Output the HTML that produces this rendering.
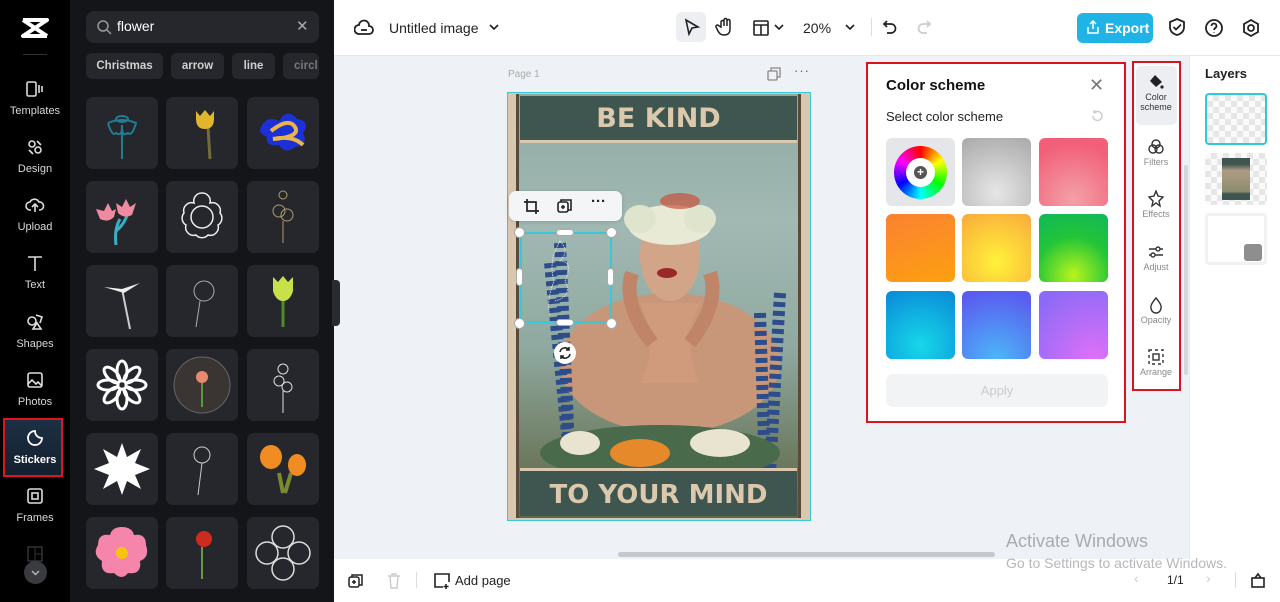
<!DOCTYPE html>
<html><head><meta charset="utf-8"><style>
*{box-sizing:border-box;margin:0;padding:0}
body{width:1280px;height:602px;overflow:hidden;font-family:"Liberation Sans",sans-serif;background:#eef1f5;position:relative}
.a{position:absolute}
.rail{left:0;top:0;width:70px;height:602px;background:#000}
.ri{position:absolute;left:0;width:70px;text-align:center;color:#d8d8d8;font-size:11px}
.ri svg{display:block;margin:0 auto 7px}
.panel{left:70px;top:0;width:264px;height:602px;background:#141519}
.tile{position:absolute;width:72px;height:72px;background:#26272c;border-radius:7px}
.chip{position:absolute;top:53px;height:26px;background:#26272c;border-radius:6px;color:#d0d0d0;font-size:11.5px;font-weight:bold;line-height:26px;text-align:center}
.top{left:334px;top:0;width:946px;height:55px;background:#fff}
.sw{position:absolute;width:69px;height:68px;border-radius:6px}
.ti{position:absolute;left:1135px;width:42px;text-align:center;font-size:9px;color:#888}
.ti svg{display:block;margin:0 auto 1px}
</style></head><body>
<div class="a rail"></div>
<svg class="a" style="left:20px;top:17px" width="30" height="22" viewBox="0 0 30 22"><path d="M3 3h24L3 19h24M3 3l24 16" fill="none" stroke="#fff" stroke-width="4" stroke-linejoin="round"/></svg>
<div class="a" style="left:23px;top:54px;width:24px;height:1px;background:#333"></div>
<div class="ri" style="top:80px"><svg width="20" height="18" viewBox="0 0 20 18" fill="none" stroke="#ddd" stroke-width="1.6"><rect x="2" y="2" width="9" height="14" rx="1.5"/><path d="M14 5v8M17 6v6"/></svg>Templates</div>
<div class="ri" style="top:138px"><svg width="20" height="18" viewBox="0 0 20 18" fill="none" stroke="#ddd" stroke-width="1.6"><circle cx="7" cy="6" r="3"/><circle cx="13" cy="12" r="3"/><path d="M12 3l4 4M4 12l4 4"/></svg>Design</div>
<div class="ri" style="top:196px"><svg width="20" height="18" viewBox="0 0 20 18" fill="none" stroke="#ddd" stroke-width="1.6"><path d="M6 14H5a4 4 0 010-8 5 5 0 019 0 4 4 0 011 8h-1M10 16V8M7 11l3-3 3 3"/></svg>Upload</div>
<div class="ri" style="top:254px"><svg width="20" height="18" viewBox="0 0 20 18" fill="none" stroke="#ddd" stroke-width="1.6"><path d="M3 3h14M10 3v14"/></svg>Text</div>
<div class="ri" style="top:313px"><svg width="20" height="18" viewBox="0 0 20 18" fill="none" stroke="#ddd" stroke-width="1.6"><circle cx="7" cy="8" r="4"/><path d="M11 2l6 2-2 6M8 16l4-6 4 6z"/></svg>Shapes</div>
<div class="ri" style="top:371px"><svg width="20" height="18" viewBox="0 0 20 18" fill="none" stroke="#ddd" stroke-width="1.6"><rect x="3" y="2" width="14" height="14" rx="2"/><path d="M3 13l4-4 4 4 2-2 4 4"/></svg>Photos</div>
<div class="a" style="left:3px;top:418px;width:60px;height:59px;border:2px solid #e0141e;background:linear-gradient(#1c3045,#14202e)"></div>
<div class="ri" style="top:429px;color:#fff;font-weight:bold"><svg width="20" height="18" viewBox="0 0 20 18" fill="none" stroke="#fff" stroke-width="1.8"><path d="M10 2a7 7 0 107 7c-4 0-7-3-7-7z"/></svg>Stickers</div>
<div class="ri" style="top:487px"><svg width="20" height="18" viewBox="0 0 20 18" fill="none" stroke="#ddd" stroke-width="1.6"><rect x="3" y="2" width="14" height="14" rx="2"/><rect x="7" y="6" width="6" height="6"/></svg>Frames</div>
<svg class="a" style="left:27px;top:546px" width="16" height="16"><rect x="1" y="1" width="14" height="14" fill="none" stroke="#333" stroke-width="1.5"/><path d="M8 1v14M8 8h7" stroke="#333"/></svg>
<div class="a" style="left:24px;top:561px;width:23px;height:23px;border-radius:50%;background:#3a3b40"><svg width="23" height="23"><path d="M8 10l3.5 3.5L15 10" fill="none" stroke="#bbb" stroke-width="1.4"/></svg></div>

<div class="a panel"></div>
<div class="a" style="left:86px;top:11px;width:233px;height:32px;background:#26272c;border-radius:8px"></div>
<svg class="a" style="left:96px;top:19px" width="16" height="16" fill="none" stroke="#999" stroke-width="1.5"><circle cx="7" cy="7" r="5"/><path d="M11 11l4 4"/></svg>
<div class="a" style="left:117px;top:18px;color:#fff;font-size:14px">flower</div>
<div class="a" style="left:296px;top:17px;color:#aaa;font-size:15px">✕</div>
<div class="chip" style="left:86px;width:77px">Christmas</div>
<div class="chip" style="left:171px;width:53px">arrow</div>
<div class="chip" style="left:232px;width:43px">line</div>
<div class="chip" style="left:283px;width:36px;overflow:hidden;text-align:left;padding-left:11px;color:#777">circl</div>

<div class="tile" style="left:86px;top:97px"><svg width="72" height="72"><g fill="none" stroke="#1d7d93" stroke-width="2"><ellipse cx="36" cy="22" rx="6" ry="3"/><path d="M22 26q14-6 28 0q-4 14-8 10q-6 4-6-6q0 10-6 6q-4 4-8-10M36 28v34"/></g></svg></div>
<div class="tile" style="left:166px;top:97px"><svg width="72" height="72"><path d="M42 30l2 32" stroke="#6f6e3e" stroke-width="3"/><path d="M30 14l4 5 5-6 5 6 4-5v8q0 10-9 10t-9-10z" fill="#e3b52a"/></svg></div>
<div class="tile" style="left:247px;top:97px"><svg width="72" height="72"><path d="M14 30q6-12 18-6q8-14 18-2q14 2 6 14q6 12-8 14q-10 8-16-2q-14 2-12-8q-10-4-6-10z" fill="#1c30d8"/><path d="M24 34q18-14 24-4t-22 12q20-4 30 6" fill="none" stroke="#e9b44a" stroke-width="4"/></svg></div>
<div class="tile" style="left:86px;top:181px"><svg width="72" height="72"><path d="M34 38q-6 10-4 26M30 50q8-6 12-18" stroke="#37b0c4" stroke-width="3" fill="none"/><path d="M10 28l8 2 4-8 4 8 4-2-2 8q-6 6-14 2z M30 22l6 4 4-8 4 8 6-4-4 12q-8 4-14-2z" fill="#f08aa0"/></svg></div>
<div class="tile" style="left:166px;top:181px"><svg width="72" height="72"><g fill="none" stroke="#eee" stroke-width="1.5"><circle cx="36" cy="36" r="11"/><path d="M36 12a8 8 0 018 10a8 8 0 0110 10a8 8 0 01-2 12a8 8 0 01-10 10a8 8 0 01-12 0a8 8 0 01-10-10a8 8 0 01-2-12a8 8 0 0110-10a8 8 0 018-10z"/></g></svg></div>
<div class="tile" style="left:247px;top:181px"><svg width="72" height="72"><g fill="none" stroke="#b39a6b" stroke-width="1"><circle cx="36" cy="14" r="4"/><circle cx="32" cy="30" r="6"/><circle cx="40" cy="34" r="6"/><path d="M36 40v22"/></g></svg></div>
<div class="tile" style="left:86px;top:265px"><svg width="72" height="72"><path d="M36 24l8 40" stroke="#ccc" stroke-width="2"/><path d="M18 22l18 2 18-6-16 10z" fill="#eee"/></svg></div>
<div class="tile" style="left:166px;top:265px"><svg width="72" height="72"><g fill="none" stroke="#aaa"><circle cx="38" cy="26" r="10"/><path d="M34 36l-4 26"/></g></svg></div>
<div class="tile" style="left:247px;top:265px"><svg width="72" height="72"><path d="M36 34v28" stroke="#4f8a2c" stroke-width="3"/><path d="M26 12l5 5 5-6 5 6 5-5v14q-3 10-10 10t-10-10z" fill="#c8e04a"/></svg></div>
<div class="tile" style="left:86px;top:349px"><svg width="72" height="72"><g fill="none" stroke="#fff" stroke-width="3"><ellipse cx="36" cy="22" rx="5" ry="10"/><ellipse cx="36" cy="50" rx="5" ry="10"/><ellipse cx="22" cy="36" rx="10" ry="5"/><ellipse cx="50" cy="36" rx="10" ry="5"/><ellipse cx="26" cy="26" rx="5" ry="10" transform="rotate(-45 26 26)"/><ellipse cx="46" cy="46" rx="5" ry="10" transform="rotate(-45 46 46)"/><ellipse cx="46" cy="26" rx="5" ry="10" transform="rotate(45 46 26)"/><ellipse cx="26" cy="46" rx="5" ry="10" transform="rotate(45 26 46)"/></g></svg></div>
<div class="tile" style="left:166px;top:349px"><svg width="72" height="72"><circle cx="36" cy="36" r="28" fill="#3a3532" stroke="#666"/><circle cx="36" cy="28" r="6" fill="#e78a70"/><path d="M36 34v24" stroke="#5a9a3a" stroke-width="2"/></svg></div>
<div class="tile" style="left:247px;top:349px"><svg width="72" height="72"><g fill="none" stroke="#ddd"><circle cx="36" cy="20" r="5"/><circle cx="32" cy="32" r="5"/><circle cx="40" cy="38" r="5"/><path d="M36 42v22"/></g></svg></div>
<div class="tile" style="left:86px;top:433px"><svg width="72" height="72"><path d="M36 10l5 14 14-8-6 14 15 6-15 6 6 14-14-8-5 14-5-14-14 8 6-14-15-6 15-6-6-14 14 8z" fill="#fff"/></svg></div>
<div class="tile" style="left:166px;top:433px"><svg width="72" height="72"><g fill="none" stroke="#ccc"><circle cx="36" cy="22" r="8"/><path d="M36 30l-4 32"/></g></svg></div>
<div class="tile" style="left:247px;top:433px"><svg width="72" height="72"><path d="M32 40l4 20M44 40l-6 20" stroke="#7a8a30" stroke-width="4"/><ellipse cx="24" cy="24" rx="11" ry="12" fill="#f08c22"/><ellipse cx="50" cy="32" rx="9" ry="11" fill="#f08c22"/></svg></div>
<div class="tile" style="left:86px;top:517px"><svg width="72" height="72"><path d="M36 10q10 0 12 8q12-2 12 10q4 12-6 16q2 14-12 12q-6 8-14 0q-14 2-12-12q-10-6-4-16q0-12 12-10q2-8 12-8z" fill="#f585ab"/><circle cx="36" cy="36" r="6" fill="#f6c40f"/></svg></div>
<div class="tile" style="left:166px;top:517px"><svg width="72" height="72"><path d="M36 30v32" stroke="#6a9a3a" stroke-width="2"/><circle cx="38" cy="22" r="8" fill="#cf2a1e"/></svg></div>
<div class="tile" style="left:247px;top:517px"><svg width="72" height="72"><g fill="none" stroke="#ddd" stroke-width="1.5"><circle cx="36" cy="20" r="11"/><circle cx="36" cy="52" r="11"/><circle cx="20" cy="36" r="11"/><circle cx="52" cy="36" r="11"/></g></svg></div>
<div class="a" style="left:332px;top:280px;width:8px;height:46px;background:#2a2b30;border-radius:0 4px 4px 0"></div>

<div class="a top"></div>
<svg class="a" style="left:354px;top:19px" width="20" height="18" fill="none" stroke="#222" stroke-width="1.8"><path d="M5 15h10a4 4 0 000-8 5 5 0 00-10-1 4 4 0 000 9z"/><path d="M7 11h6"/></svg>
<div class="a" style="left:389px;top:20px;font-size:14px;color:#222">Untitled image</div>
<svg class="a" style="left:488px;top:22px" width="12" height="10"><path d="M2 3l4 4 4-4" fill="none" stroke="#222" stroke-width="1.6"/></svg>
<div class="a" style="left:676px;top:12px;width:30px;height:30px;background:#eceef1;border-radius:6px"></div>
<svg class="a" style="left:683px;top:18px" width="18" height="18" fill="none" stroke="#222" stroke-width="1.6"><path d="M3 2l12 7-6 1-3 6z"/></svg>
<svg class="a" style="left:715px;top:17px" width="20" height="20" fill="none" stroke="#222" stroke-width="1.5"><path d="M6 10V5a1.5 1.5 0 013 0v4V3a1.5 1.5 0 013 0v6V4a1.5 1.5 0 013 0v8q0 6-6 6-4 0-6-4l-2-4a1.5 1.5 0 012.5-1.5z"/></svg>
<svg class="a" style="left:752px;top:19px" width="18" height="18" fill="none" stroke="#222" stroke-width="1.6"><rect x="2" y="2" width="14" height="14" rx="1"/><path d="M2 6h14M9 6v10"/></svg>
<svg class="a" style="left:773px;top:22px" width="12" height="10"><path d="M2 3l4 4 4-4" fill="none" stroke="#222" stroke-width="1.6"/></svg>
<div class="a" style="left:803px;top:20px;font-size:14px;color:#222">20%</div>
<svg class="a" style="left:844px;top:22px" width="12" height="10"><path d="M2 3l4 4 4-4" fill="none" stroke="#222" stroke-width="1.6"/></svg>
<div class="a" style="left:871px;top:18px;width:1px;height:18px;background:#ddd"></div>
<svg class="a" style="left:881px;top:18px" width="18" height="18" fill="none" stroke="#222" stroke-width="1.7"><path d="M6 3L3 6l3 3M3 6h7a4 4 0 010 9H6"/></svg>
<svg class="a" style="left:915px;top:18px" width="18" height="18" fill="none" stroke="#ccc" stroke-width="1.7"><path d="M12 3l3 3-3 3M15 6H8a4 4 0 000 9h4"/></svg>
<div class="a" style="left:1077px;top:13px;width:76px;height:30px;background:#1fb3e6;border-radius:6px;color:#fff;font-size:14px;font-weight:bold;line-height:30px;padding-left:28px">Export</div>
<svg class="a" style="left:1086px;top:20px" width="14" height="15" fill="none" stroke="#fff" stroke-width="1.5"><path d="M7 9V1M4 4l3-3 3 3M2 7v6h10V7"/></svg>
<svg class="a" style="left:1167px;top:17px" width="20" height="20" fill="none" stroke="#222" stroke-width="1.8"><path d="M10 2l7 3v5q0 6-7 8-7-2-7-8V5z"/><path d="M6.5 10l2.5 2.5L14 7.5"/></svg>
<svg class="a" style="left:1204px;top:18px" width="20" height="20" fill="none" stroke="#222" stroke-width="1.8"><circle cx="10" cy="10" r="8"/><path d="M7.5 8a2.5 2.5 0 115 0c0 2-2.5 2-2.5 4M10 14.5v.5"/></svg>
<svg class="a" style="left:1241px;top:18px" width="20" height="20" fill="none" stroke="#222" stroke-width="1.8"><path d="M10 2l7 4v8l-7 4-7-4V6z"/><circle cx="10" cy="10" r="3"/></svg>
<div class="a" style="left:334px;top:55px;width:946px;height:1px;background:#e6e8eb"></div>

<div class="a" style="left:508px;top:69px;font-size:10px;color:#aaa">Page 1</div>
<svg class="a" style="left:767px;top:67px" width="14" height="14" fill="none" stroke="#888" stroke-width="1.3"><rect x="1" y="4" width="9" height="9" rx="1"/><path d="M4 4V1h9v9h-3"/></svg>
<div class="a" style="left:794px;top:63px;font-size:13px;color:#666;letter-spacing:1px">···</div>

<div class="a" style="left:507px;top:92px;width:304px;height:429px;border:1.5px solid #38c8d8;background:#d9c7b0"></div>
<div class="a" style="left:516px;top:94px;width:285px;height:424px;border-left:3px solid #5a4a3a;border-right:3px solid #5a4a3a;background:linear-gradient(180deg,#8fa9a2 0%,#a2b9b3 30%,#8fa9a0 60%,#6f7c62 85%,#5c6a4c 100%)"></div>
<div class="a" style="left:520px;top:96px;width:277px;height:44px;background:#3f5650;color:#dcc9ad;font-weight:bold;font-size:27px;text-align:center;line-height:46px;font-family:'DejaVu Sans',sans-serif">BE KIND</div>
<div class="a" style="left:520px;top:140px;width:277px;height:3px;background:#d9c7b0"></div>
<div class="a" style="left:520px;top:468px;width:277px;height:3px;background:#d9c7b0"></div>
<div class="a" style="left:520px;top:471px;width:277px;height:45px;background:#3f5650;color:#dcc9ad;font-weight:bold;font-size:26px;text-align:center;line-height:48px;font-family:'DejaVu Sans',sans-serif">TO YOUR MIND</div>
<svg class="a" style="left:520px;top:143px" width="277" height="325">
<ellipse cx="150" cy="220" rx="110" ry="70" fill="#c89678"/>
<path d="M120 160q20 40 0 80h60q-20-40 0-80z" fill="#d09a7c"/>
<ellipse cx="150" cy="112" rx="30" ry="46" fill="#d2a488"/>
<ellipse cx="147" cy="130" rx="10" ry="5" fill="#9a2828"/>
<path d="M112 130q-10 30 20 70M190 130q10 30-20 70" stroke="#c08468" stroke-width="14" fill="none"/>
<ellipse cx="150" cy="82" rx="42" ry="20" fill="#e8ead6"/>
<ellipse cx="120" cy="76" rx="16" ry="14" fill="#dfe4cc"/>
<ellipse cx="180" cy="76" rx="16" ry="14" fill="#dfe4cc"/>
<ellipse cx="160" cy="58" rx="20" ry="8" fill="#c7533a" opacity=".7"/>
<path d="M40 100l10 230M30 120l20 200M260 150l-10 180M240 170l5 160" stroke="#2e4c8a" stroke-width="12" stroke-dasharray="5 4"/>
<ellipse cx="140" cy="310" rx="120" ry="28" fill="#4a6a4c"/>
<ellipse cx="120" cy="310" rx="30" ry="14" fill="#e6892a"/>
<ellipse cx="200" cy="300" rx="30" ry="14" fill="#e8e4d0"/>
<ellipse cx="60" cy="300" rx="20" ry="12" fill="#e8e4d0"/>
</svg>
<div class="a" style="left:520px;top:232px;width:92px;height:91px;border:2px solid #38c8d8"></div>
<svg class="a" style="left:530px;top:236px" width="60" height="85" fill="none" stroke="#eee" stroke-width=".8" stroke-dasharray="1.5 1"><path d="M30 5q10 10 0 20q14 0 5 20q8 15-10 20M30 5q-12 20-6 40q-8 20-4 35"/></svg>
<div class="a" style="left:514px;top:227px;width:11px;height:11px;border-radius:50%;background:#fff;border:1px solid #aaa"></div>
<div class="a" style="left:606px;top:227px;width:11px;height:11px;border-radius:50%;background:#fff;border:1px solid #aaa"></div>
<div class="a" style="left:514px;top:318px;width:11px;height:11px;border-radius:50%;background:#fff;border:1px solid #aaa"></div>
<div class="a" style="left:606px;top:318px;width:11px;height:11px;border-radius:50%;background:#fff;border:1px solid #aaa"></div>
<div class="a" style="left:556px;top:229px;width:18px;height:7px;border-radius:4px;background:#fff;border:1px solid #aaa"></div>
<div class="a" style="left:556px;top:319px;width:18px;height:7px;border-radius:4px;background:#fff;border:1px solid #aaa"></div>
<div class="a" style="left:516px;top:268px;width:7px;height:18px;border-radius:4px;background:#fff;border:1px solid #aaa"></div>
<div class="a" style="left:607px;top:268px;width:7px;height:18px;border-radius:4px;background:#fff;border:1px solid #aaa"></div>
<div class="a" style="left:554px;top:342px;width:22px;height:22px;border-radius:50%;background:#fff"><svg width="22" height="22" fill="none" stroke="#222" stroke-width="1.6"><path d="M6 10a5 5 0 019-2M16 12a5 5 0 01-9 2M15 5v3h-3M7 17v-3h3"/></svg></div>
<div class="a" style="left:509px;top:191px;width:113px;height:30px;background:#f4f5f6;border-radius:7px;box-shadow:0 1px 4px rgba(0,0,0,.15)"></div>
<svg class="a" style="left:523px;top:198px" width="17" height="17" fill="none" stroke="#222" stroke-width="1.7"><path d="M4 1v12h12M1 4h12v12"/></svg>
<svg class="a" style="left:557px;top:198px" width="16" height="16" fill="none" stroke="#222" stroke-width="1.6"><rect x="1" y="4" width="10" height="10" rx="2"/><path d="M4 4V2h10v10h-3M6 7v4M4 9h4"/></svg>
<div class="a" style="left:591px;top:193px;font-size:15px;font-weight:bold;color:#222">···</div>

<div class="a" style="left:866px;top:62px;width:260px;height:361px;background:#fff;border:2px solid #d9141c"></div>
<div class="a" style="left:886px;top:77px;font-size:15px;font-weight:bold;color:#111">Color scheme</div>
<div class="a" style="left:1089px;top:75px;font-size:18px;color:#777">✕</div>
<div class="a" style="left:886px;top:109px;font-size:13px;color:#222">Select color scheme</div>
<svg class="a" style="left:1090px;top:109px" width="14" height="14" fill="none" stroke="#ccc" stroke-width="1.4"><path d="M3 7a4.5 4.5 0 104-4.5H4M4 1v2.5h2.5"/></svg>
<div class="sw" style="left:886px;top:138px;background:#e4e6ea"></div>
<div class="a" style="left:894px;top:146px;width:53px;height:53px;border-radius:50%;background:conic-gradient(red,#ff0,#0f0,#0ff,#00f,#f0f,red)"></div>
<div class="a" style="left:906px;top:158px;width:29px;height:29px;border-radius:50%;background:#fff"></div>
<div class="a" style="left:914px;top:166px;width:13px;height:13px;border-radius:50%;background:#555;color:#fff;font-size:12px;line-height:12px;text-align:center;font-weight:bold">+</div>
<div class="sw" style="left:962px;top:138px;background:radial-gradient(circle at 50% 80%,#e6e6e6,#a9a9a9)"></div>
<div class="sw" style="left:1039px;top:138px;background:radial-gradient(circle at 50% 90%,#f4a0a8,#f16078 80%)"></div>
<div class="sw" style="left:886px;top:214px;background:linear-gradient(160deg,#fb8132,#fca10f)"></div>
<div class="sw" style="left:962px;top:214px;background:radial-gradient(circle at 50% 70%,#fff23a,#f9a23c 110%)"></div>
<div class="sw" style="left:1039px;top:214px;background:radial-gradient(circle at 50% 90%,#b8f51c,#22c438 55%,#12b85a)"></div>
<div class="sw" style="left:886px;top:291px;background:radial-gradient(circle at 50% 80%,#16d8e8,#0a88d8)"></div>
<div class="sw" style="left:962px;top:291px;background:radial-gradient(circle at 50% 100%,#4bb7f8,#5a5cf0 90%)"></div>
<div class="sw" style="left:1039px;top:291px;background:radial-gradient(circle at 80% 100%,#e070f8,#8a6af6 90%)"></div>
<div class="a" style="left:886px;top:374px;width:222px;height:33px;border-radius:7px;background:#f2f3f5;color:#ccc;font-size:13px;text-align:center;line-height:33px">Apply</div>

<div class="a" style="left:1132px;top:61px;width:49px;height:330px;background:#fff;border:2px solid #d9141c"></div>
<div class="a" style="left:1136px;top:66px;width:41px;height:59px;background:#eceef1;border-radius:5px"></div>
<div class="ti" style="top:73px;color:#333"><svg width="18" height="18" viewBox="0 0 18 18"><path d="M8 2l7 7-6 5-6-6z" fill="#222"/><circle cx="15" cy="14" r="1.6" fill="#222"/></svg>Color<br>scheme</div>
<div class="ti" style="top:138px"><svg width="18" height="18" fill="none" stroke="#333" stroke-width="1.4"><circle cx="9" cy="6" r="4"/><circle cx="6" cy="11" r="4"/><circle cx="12" cy="11" r="4"/></svg>Filters</div>
<div class="ti" style="top:190px"><svg width="18" height="18" fill="none" stroke="#333" stroke-width="1.4"><path d="M9 1l2 5 5 1-4 4 1 5-4-3-4 3 1-5-4-4 5-1z"/></svg>Effects</div>
<div class="ti" style="top:243px"><svg width="18" height="18" fill="none" stroke="#333" stroke-width="1.4"><path d="M2 6h14M2 12h14"/><circle cx="11" cy="6" r="2" fill="#fff"/><circle cx="6" cy="12" r="2" fill="#fff"/></svg>Adjust</div>
<div class="ti" style="top:296px"><svg width="18" height="18" fill="none" stroke="#333" stroke-width="1.4"><path d="M9 2q6 7 5 10a5 5 0 01-10 0q-1-3 5-10z"/></svg>Opacity</div>
<div class="ti" style="top:348px"><svg width="18" height="18" fill="none" stroke="#333" stroke-width="1.4" ><rect x="2" y="2" width="14" height="14" stroke-dasharray="3 3"/><rect x="6" y="6" width="6" height="6"/></svg>Arrange</div>
<div class="a" style="left:1184px;top:165px;width:4px;height:210px;background:#d5d7da;border-radius:2px"></div>
<div class="a" style="left:1189px;top:56px;width:91px;height:546px;background:#fff;border-left:1px solid #e6e8eb"></div>
<div class="a" style="left:1205px;top:66px;font-size:13px;font-weight:bold;color:#222">Layers</div>
<div class="a" style="left:1205px;top:93px;width:62px;height:52px;border:2px solid #2fc8d6;border-radius:4px;background:repeating-conic-gradient(#e6e6e6 0 25%,#fafafa 0 50%) 0 0/12px 12px"></div>
<div class="a" style="left:1205px;top:153px;width:62px;height:52px;border-radius:4px;background:repeating-conic-gradient(#e6e6e6 0 25%,#fafafa 0 50%) 0 0/12px 12px"></div>
<div class="a" style="left:1222px;top:158px;width:28px;height:42px;background:linear-gradient(#3f5650 15%,#b09a84 30%,#8a8e6e 80%,#3f5650 85%)"></div>
<div class="a" style="left:1205px;top:213px;width:62px;height:52px;border-radius:4px;border:3px solid #f0f1f3;background:#fff"></div>
<div class="a" style="left:1244px;top:244px;width:18px;height:17px;border-radius:3px;background:#8e8e8e"></div>

<div class="a" style="left:618px;top:552px;width:377px;height:5px;background:#c5c8cc;border-radius:3px"></div>
<div class="a" style="left:334px;top:559px;width:946px;height:43px;background:#fff"></div>
<div class="a" style="left:995px;top:520px;width:194px;height:38px;background:#eef1f5"></div>
<svg class="a" style="left:348px;top:573px" width="16" height="16" fill="none" stroke="#222" stroke-width="1.5"><rect x="1" y="4" width="10" height="10" rx="2"/><path d="M4 4V2h10v10h-3M6 7v4M4 9h4"/></svg>
<svg class="a" style="left:387px;top:573px" width="14" height="16" fill="none" stroke="#ccc" stroke-width="1.4"><path d="M1 3h12M5 3V1h4v2M3 3l1 12h6l1-12"/></svg>
<div class="a" style="left:416px;top:572px;width:1px;height:16px;background:#ddd"></div>
<svg class="a" style="left:433px;top:572px" width="18" height="17" fill="none" stroke="#222" stroke-width="1.6"><path d="M10 15H2V2h14v8M13 12v5M10.5 14.5h5"/></svg>
<div class="a" style="left:455px;top:573px;font-size:13px;color:#222">Add page</div>
<div class="a" style="left:1006px;top:531px;font-size:18px;color:#a8abb0">Activate Windows</div>
<div class="a" style="left:1006px;top:555px;font-size:14px;color:#b4b7bb">Go to Settings to activate Windows.</div>
<div class="a" style="left:1134px;top:570px;font-size:14px;color:#ccc">‹</div>
<div class="a" style="left:1167px;top:573px;font-size:12px;color:#222">1/1</div>
<div class="a" style="left:1206px;top:570px;font-size:14px;color:#ccc">›</div>
<div class="a" style="left:1235px;top:572px;width:1px;height:16px;background:#ddd"></div>
<svg class="a" style="left:1250px;top:572px" width="16" height="16" fill="none" stroke="#222" stroke-width="1.6"><rect x="2" y="6" width="12" height="9"/><path d="M5 6l3-4 3 4"/></svg>
</body></html>
